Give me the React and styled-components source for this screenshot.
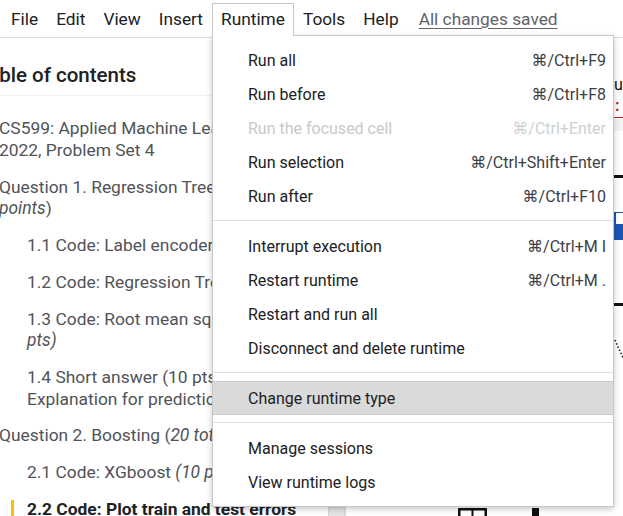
import React from 'react';
import styled, { createGlobalStyle } from 'styled-components';

const GlobalStyle = createGlobalStyle`
  html, body {
    margin: 0;
    padding: 0;
    background: #fff;
  }
  body {
    font-family: Roboto, "Liberation Sans", "DejaVu Sans", sans-serif;
    overflow: hidden;
  }
`;

const Page = styled.div`
  position: relative;
  width: 623px;
  height: 516px;
  overflow: hidden;
  background: #fff;
  display: flex;
  flex-direction: column;
`;

const MenuBar = styled.div`
  display: flex;
  align-items: flex-start;
  height: 37px;
  padding-left: 2px;
  border-bottom: 1px solid #dadce0;
  flex-shrink: 0;
`;

const MenuTab = styled.div`
  position: relative;
  z-index: ${(props) => (props.$open ? 3 : 0)};
  box-sizing: border-box;
  height: 33px;
  margin-top: 3px;
  padding: 0 8px 2px;
  display: flex;
  align-items: center;
  font-size: 17.3px;
  color: #202124;
  background: ${(props) => (props.$open ? '#fff' : 'transparent')};
  border: 1px solid ${(props) => (props.$open ? '#c8c8c8' : 'transparent')};
  border-bottom: none;
  white-space: nowrap;
`;

const SavedLink = styled.div`
  box-sizing: border-box;
  margin: 3px 0 0 11px;
  height: 33px;
  padding: 1px 0 2px;
  display: flex;
  align-items: center;
  font-size: 17.3px;
  color: #5f6368;
  text-decoration: underline;
  text-underline-offset: 3px;
  white-space: nowrap;
`;

const Body = styled.div`
  flex: 1;
  min-height: 0;
  display: flex;
`;

const Sidebar = styled.div`
  box-sizing: border-box;
  width: 346px;
  flex-shrink: 0;
  border-right: 1px solid #dadce0;
  display: flex;
`;

const TocPane = styled.div`
  flex: 1;
  min-width: 0;
  overflow: hidden;
`;

const TocTitle = styled.div`
  margin-left: -23px;
  padding: 24.7px 0 8.3px;
  border-bottom: 1px solid #f1f1f1;
  font-size: 20.5px;
  font-weight: 500;
  line-height: 24px;
  color: #202124;
  white-space: nowrap;
`;

const TocList = styled.div`
  padding-top: 14.8px;
`;

const TocItem = styled.div`
  display: flex;
  align-items: stretch;
  padding: 7.5px 0 7.5px ${(props) => (props.$level ? 27 : 0)}px;
  margin-left: ${(props) => (props.$level ? 0 : -1)}px;
  font-size: 17.4px;
  line-height: 21.7px;
  color: ${(props) => (props.$active ? '#202124' : '#505357')};
  font-weight: ${(props) => (props.$active ? 700 : 400)};
  white-space: nowrap;

  i {
    font-style: italic;
  }
`;

const ActiveMarker = styled.span`
  width: 3px;
  margin: 1px 13px 0 -16px;
  background: #fbbc04;
  flex-shrink: 0;
`;

const Scrollbar = styled.div`
  width: 17px;
  flex-shrink: 0;
  display: flex;
  flex-direction: column;
`;

const ScrollThumb = styled.div`
  margin-top: auto;
  height: 8px;
  background: #e4e4e4;
  border: 1px solid #d6d6d6;
  border-bottom: none;
`;

const Notebook = styled.div`
  flex: 1;
  min-width: 0;
  display: flex;
  flex-direction: column;
  overflow: hidden;
`;

const EdgeStack = styled.div`
  padding-left: 268px;
  display: flex;
  flex-direction: column;
`;

const OutputText = styled.div`
  margin-top: 36.5px;
  height: 20px;
  line-height: 20px;
  font-size: 16px;
  color: #111;
  white-space: nowrap;
`;

const ErrorLine = styled.div`
  box-sizing: border-box;
  height: 23px;
  padding-left: 1px;
  line-height: 22px;
  font-size: 16px;
  font-weight: 700;
  color: #c5221f;
  border-bottom: 1.5px solid #b3261e;
`;

const GrayBand = styled.div`
  margin-top: 1px;
  height: 12px;
  background: #f1f3f4;
`;

const Rule = styled.div`
  margin-top: ${(props) => props.$gap}px;
  height: 3px;
  background: #111;
`;

const BlueHeader = styled.div`
  box-sizing: border-box;
  margin-top: 34px;
  height: 28px;
  padding: 1px 0 0 2px;
  background: #1f56b3;
`;

const CheckBox = styled.div`
  width: 12px;
  height: 11px;
  background: #fff;
`;

const Squiggle = styled.svg`
  display: block;
  margin-top: 33px;
`;

const BottomBar = styled.div`
  margin-top: auto;
  height: 8px;
  padding-left: 112px;
  display: flex;
  align-items: flex-start;
  gap: 45px;
  overflow: hidden;
`;

const Block = styled.div`
  width: 7px;
  height: 16px;
  background: #111;
`;

const Dropdown = styled.div`
  position: absolute;
  z-index: 2;
  top: 35px;
  left: 212px;
  width: 402px;
  box-sizing: border-box;
  padding: 7px 0;
  background: #fff;
  border: 1px solid #c8c8c8;
  box-shadow: 0 2px 6px rgba(0, 0, 0, 0.22);
`;

const Item = styled.div`
  box-sizing: border-box;
  height: 34px;
  padding: 0 7px 0 35px;
  display: flex;
  align-items: center;
  justify-content: space-between;
  font-size: 16px;
  color: ${(props) => (props.$disabled ? '#c9c9c9' : '#202124')};
  background: ${(props) => (props.$active ? '#dadada' : 'transparent')};
  border-top: 1px dotted ${(props) => (props.$active ? '#bdbdbd' : 'transparent')};
  border-bottom: 1px dotted ${(props) => (props.$active ? '#bdbdbd' : 'transparent')};
  white-space: nowrap;
`;

const Shortcut = styled.span`
  color: ${(props) => (props.$disabled ? '#d0d0d0' : '#3c4043')};
`;

const Separator = styled.div`
  height: 1px;
  margin: 7px 0 8px;
  background: #e0e0e0;
`;

const menus = ['File', 'Edit', 'View', 'Insert', 'Runtime', 'Tools', 'Help'];

const runtimeGroups = [
  [
    { label: 'Run all', key: '⌘/Ctrl+F9' },
    { label: 'Run before', key: '⌘/Ctrl+F8' },
    { label: 'Run the focused cell', key: '⌘/Ctrl+Enter', disabled: true },
    { label: 'Run selection', key: '⌘/Ctrl+Shift+Enter' },
    { label: 'Run after', key: '⌘/Ctrl+F10' },
  ],
  [
    { label: 'Interrupt execution', key: '⌘/Ctrl+M I' },
    { label: 'Restart runtime', key: '⌘/Ctrl+M .' },
    { label: 'Restart and run all' },
    { label: 'Disconnect and delete runtime' },
  ],
  [
    { label: 'Change runtime type', active: true },
  ],
  [
    { label: 'Manage sessions' },
    { label: 'View runtime logs' },
  ],
];

const App = () => (
  <Page>
    <GlobalStyle />
    <MenuBar>
      {menus.map((name) => (
        <MenuTab key={name} $open={name === 'Runtime'}>{name}</MenuTab>
      ))}
      <SavedLink>All changes saved</SavedLink>
    </MenuBar>

    <Body>
      <Sidebar>
        <TocPane>
          <TocTitle>Table of contents</TocTitle>
          <TocList>
            <TocItem>
              <span>
                CS599: Applied Machine Learning, Fall
                <br />
                2022, Problem Set 4
              </span>
            </TocItem>
            <TocItem>
              <span>
                Question 1. Regression Trees (<i>40 total</i>
                <br />
                <i>points</i>)
              </span>
            </TocItem>
            <TocItem $level={1}>
              <span>1.1 Code: Label encoder <i>(10 pts)</i></span>
            </TocItem>
            <TocItem $level={1}>
              <span>1.2 Code: Regression Tree <i>(10 pts)</i></span>
            </TocItem>
            <TocItem $level={1}>
              <span>
                1.3 Code: Root mean squared error <i>(10</i>
                <br />
                <i>pts)</i>
              </span>
            </TocItem>
            <TocItem $level={1}>
              <span>
                1.4 Short answer (10 pts):
                <br />
                Explanation for predictions
              </span>
            </TocItem>
            <TocItem>
              <span>Question 2. Boosting (<i>20 total points</i>)</span>
            </TocItem>
            <TocItem $level={1}>
              <span>2.1 Code: XGboost <i>(10 pts)</i></span>
            </TocItem>
            <TocItem $level={1} $active>
              <ActiveMarker />
              <span>2.2 Code: Plot train and test errors</span>
            </TocItem>
          </TocList>
        </TocPane>
        <Scrollbar>
          <ScrollThumb />
        </Scrollbar>
      </Sidebar>

      <Notebook>
        <EdgeStack>
          <OutputText>ud</OutputText>
          <ErrorLine>:</ErrorLine>
          <GrayBand />
          <Rule $gap={44} />
          <BlueHeader>
            <CheckBox />
          </BlueHeader>
          <Rule $gap={63} />
          <Squiggle width="12" height="22" viewBox="0 0 12 22">
            <path d="M1 1 L4 8 L6 12 L10 21" fill="none" stroke="#222" strokeWidth="1.6" strokeDasharray="1.5 2" />
          </Squiggle>
        </EdgeStack>
        <BottomBar>
          <svg width="29" height="16" viewBox="0 0 29 16">
            <rect x="1.25" y="1.25" width="26.5" height="20" fill="none" stroke="#111" strokeWidth="2.5" />
            <line x1="14.5" y1="1" x2="14.5" y2="16" stroke="#111" strokeWidth="2" />
          </svg>
          <Block />
        </BottomBar>
      </Notebook>
    </Body>

    <Dropdown>
      {runtimeGroups.map((group, gi) => (
        <React.Fragment key={group[0].label}>
          {gi > 0 && <Separator />}
          {group.map((item) => (
            <Item key={item.label} $disabled={item.disabled} $active={item.active}>
              <span>{item.label}</span>
              {item.key && <Shortcut $disabled={item.disabled}>{item.key}</Shortcut>}
            </Item>
          ))}
        </React.Fragment>
      ))}
    </Dropdown>
  </Page>
);

export default App;
